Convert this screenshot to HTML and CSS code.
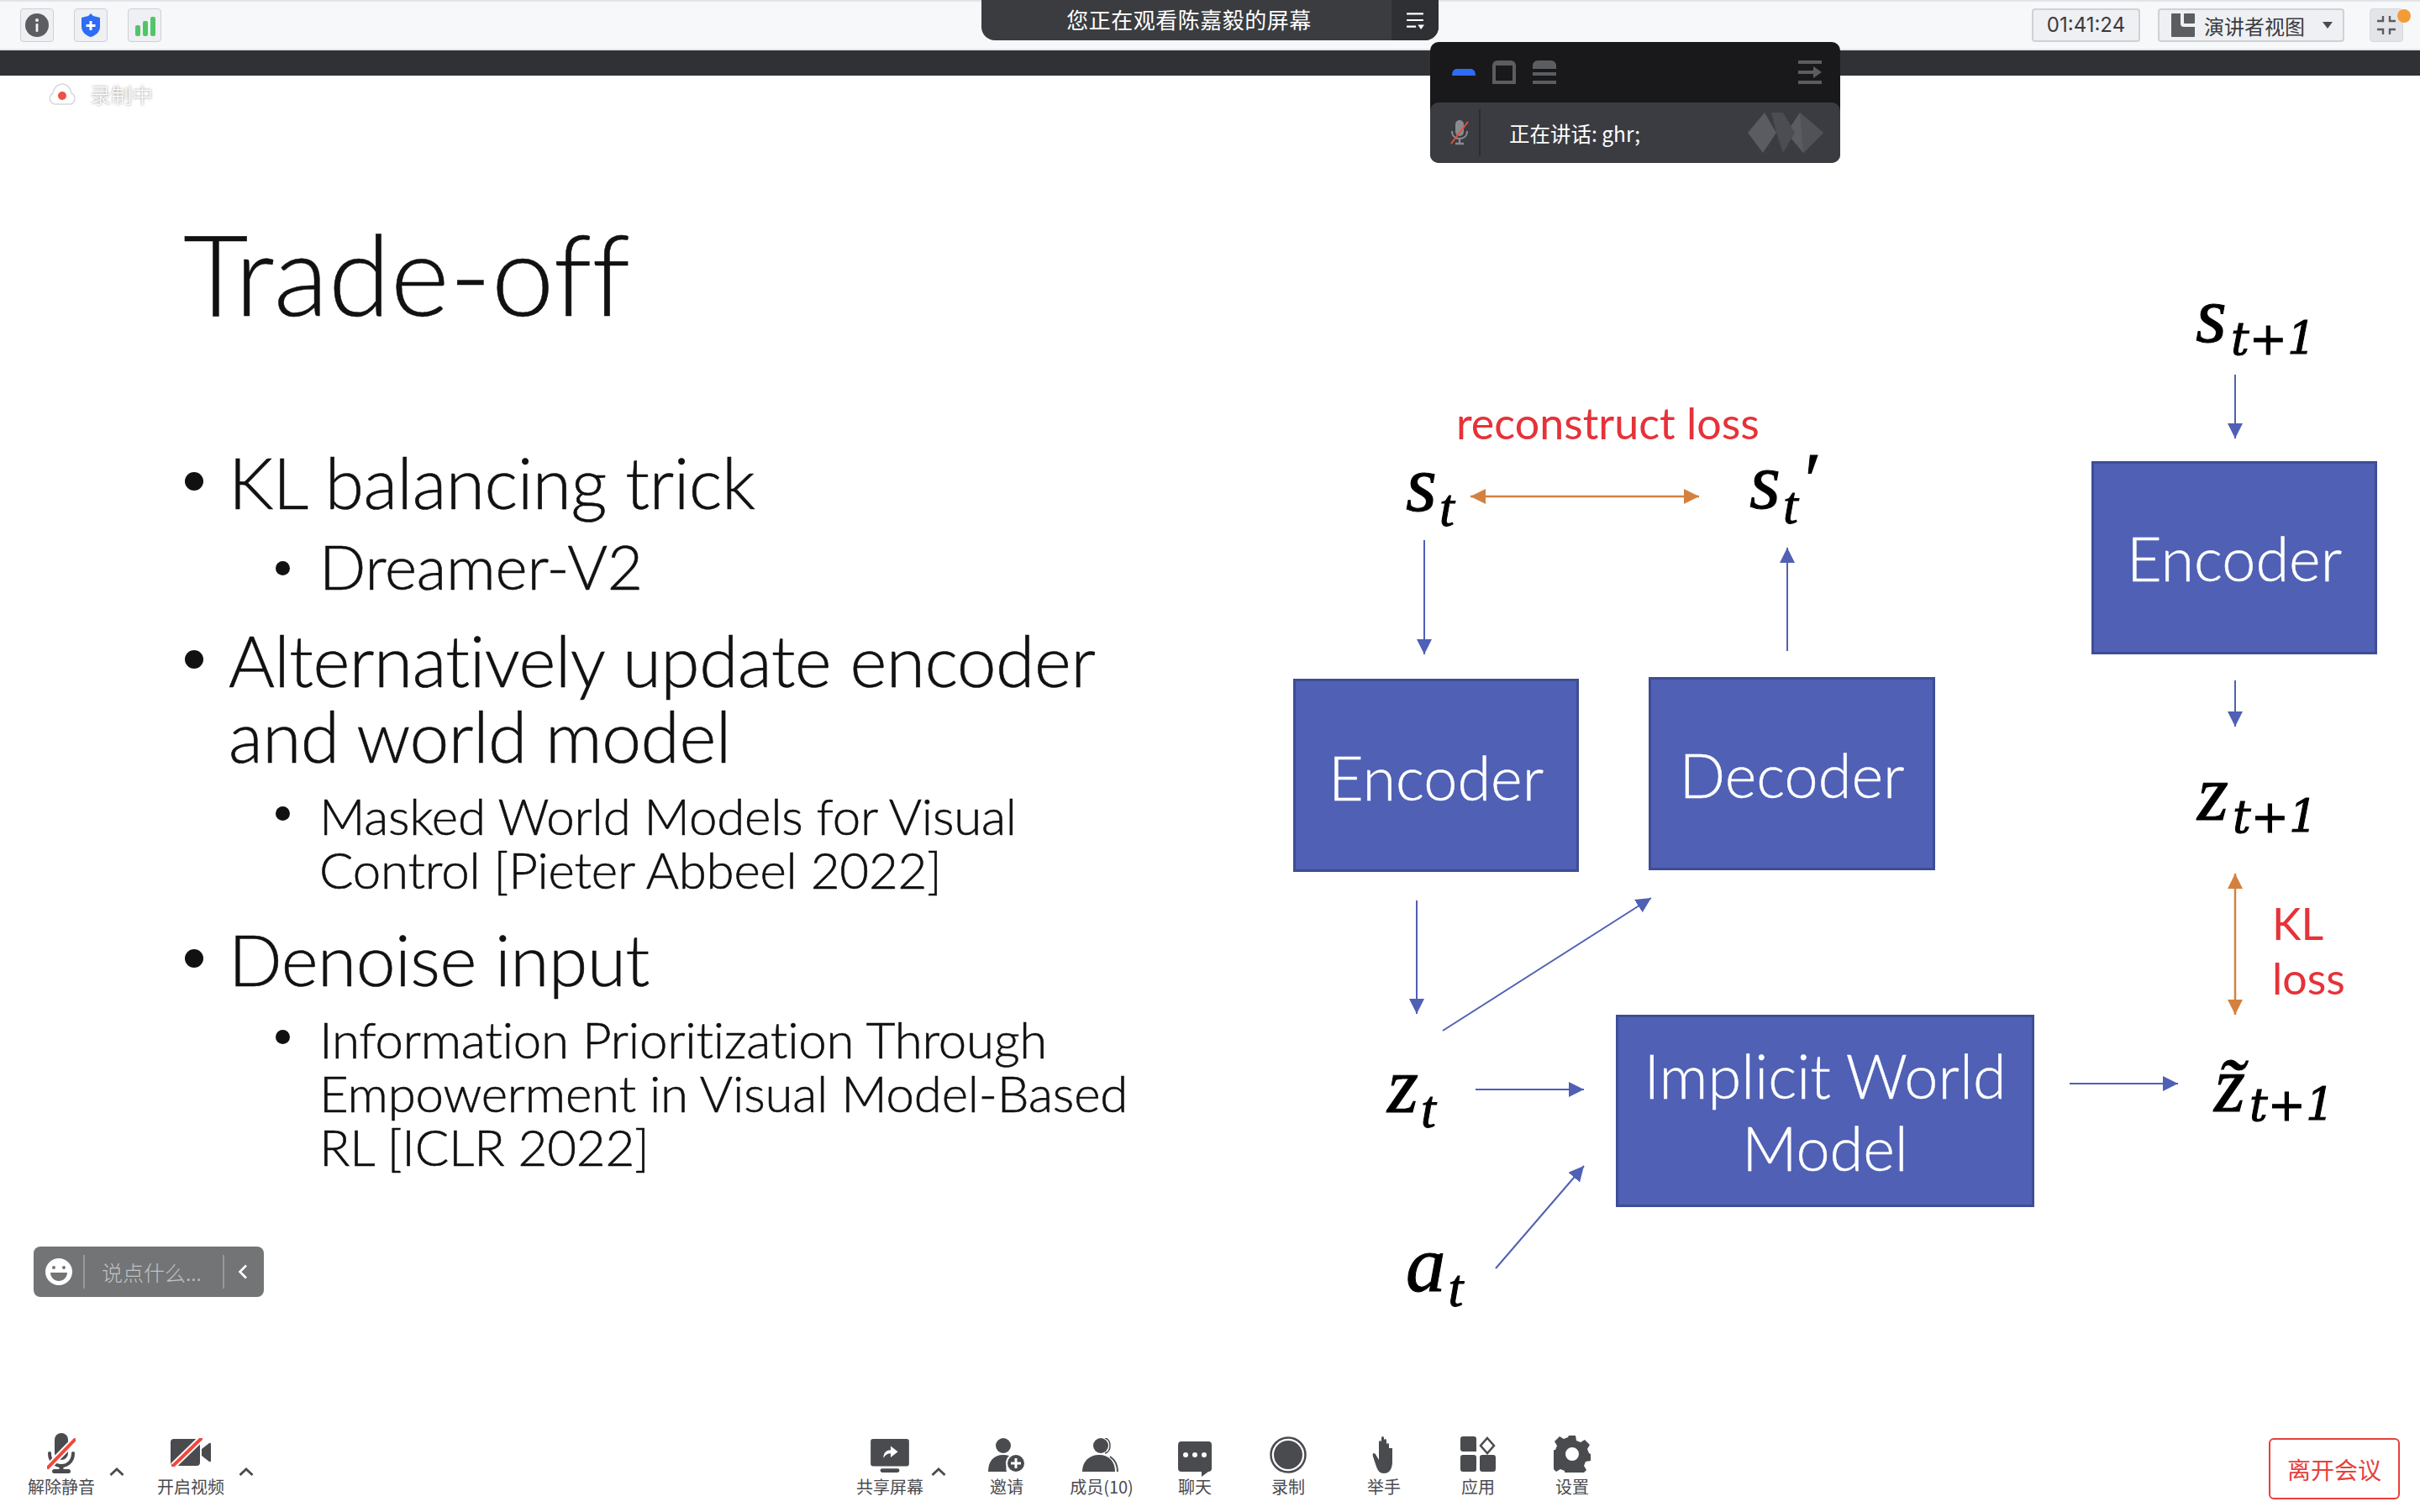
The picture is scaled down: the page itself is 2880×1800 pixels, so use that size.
FILE: index.html
```html
<!DOCTYPE html>
<html lang="zh">
<head>
    <meta charset="UTF-8">
    <title>会议</title>
    <link rel="stylesheet" href="styles.css">
</head>
<body>

<!-- Top status bar -->
<header class="topbar">
    <div class="top-left">
        <div class="top-btn">
            <svg class="top-ico" viewBox="0 0 28 28"><ellipse cx="14" cy="14" rx="14" ry="14" fill="#5c5d61"/><circle cx="14" cy="8" r="2" fill="#f2f3f5"/><rect x="12.6" y="12" width="2.8" height="10" rx="1.2" fill="#f2f3f5"/></svg>
        </div>
        <div class="top-btn">
            <svg class="top-ico" viewBox="0 0 28 28"><path d="M14 0l3 3 8 2v11c0 6-6 11-11 12C9 27 3 22 3 16V5l8-2z" fill="#2e6cf6"/><path d="M12.5 9h3v4h4v3h-4v4h-3v-4h-4v-3h4z" fill="#fff"/></svg>
        </div>
        <div class="top-btn">
            <svg class="top-ico" viewBox="0 0 28 28"><rect x="3" y="14" width="6" height="13" rx="2" fill="#52c569"/><rect x="12" y="9" width="6" height="18" rx="2" fill="#52c569"/><rect x="21" y="4" width="6" height="23" rx="2" fill="#52c569"/></svg>
        </div>
    </div>
    <div class="top-right">
        <div class="timer">01:41:24</div>
        <div class="view-btn">
            <svg class="view-ico" viewBox="0 0 28 28"><path d="M1 0h10v12a4 4 0 0 0 4 4h13v11a1 1 0 0 1-1 1H1a1 1 0 0 1-1-1V1a1 1 0 0 1 1-1z" fill="#5c5d61"/><rect x="15" y="0" width="13" height="12" rx="1" fill="#5c5d61"/></svg>
            <span>演讲者视图</span>
            <i class="caret"></i>
        </div>
        <div class="full-btn">
            <svg class="full-ico" viewBox="0 0 24 24"><path d="M8 1v6H1M16 1v6h7M8 23v-6H1M16 23v-6h7" fill="none" stroke="#5c5d61" stroke-width="2.4"/></svg>
            <span class="full-dot"></span>
        </div>
    </div>
</header>
<div class="darkstrip"></div>

<!-- Banner and speaker panel hang over the bar -->
<div class="banner">
    <div class="banner-text">您正在观看陈嘉毅的屏幕</div>
    <div class="banner-menu">
        <svg class="banner-ico" viewBox="0 0 20 20"><path d="M1 2h18v2H1zM1 9h18v2H1zM1 16h10v2H1z" fill="#fff"/><path d="M13 15h7l-3.5 5z" fill="#fff"/></svg>
    </div>
</div>

<div class="speaker">
    <div class="speaker-top">
        <svg class="sp-ico" viewBox="0 0 28 28"><path d="M0 18c0-6 3-8 6-8h16c3 0 6 2 6 8z" fill="#2e6cf6"/></svg>
        <svg class="sp-ico" viewBox="0 0 28 28"><path d="M0 28V6a6 6 0 0 1 6-6h16a6 6 0 0 1 6 6v22z" fill="#5c5d61"/><rect x="4" y="6" width="20" height="18" fill="#19191b"/></svg>
        <svg class="sp-ico" viewBox="0 0 28 28"><path d="M0 10V6a6 6 0 0 1 6-6h16a6 6 0 0 1 6 6v4z" fill="#5c5d61"/><rect y="14" width="28" height="4" fill="#5c5d61"/><rect y="24" width="28" height="4" fill="#5c5d61"/></svg>
        <svg class="sp-ico sp-last" viewBox="0 0 28 28"><rect width="28" height="4" fill="#5c5d61"/><rect y="24" width="28" height="4" fill="#5c5d61"/><path d="M0 12h18V7l10 7-10 7v-5H0z" fill="#5c5d61"/></svg>
    </div>
    <div class="speaker-row">
        <svg class="sp-mic" viewBox="0 0 24 30"><rect x="7" y="0" width="10" height="19" rx="5" fill="#8a8b8f"/><path d="M3 13c0 6 4 9 9 9s9-3 9-9" fill="none" stroke="#8a8b8f" stroke-width="2"/><path d="M12 22v5M7 28h10" stroke="#8a8b8f" stroke-width="2.4"/><path d="M2 28L22 2" stroke="#e8503f" stroke-width="2"/></svg>
        <span class="sp-divider"></span>
        <span class="sp-text">正在讲话: ghr;</span>
        <svg class="sp-avatar" viewBox="0 0 90 48"><path d="M20 0l14 24-16 24L0 24zM62 0l28 24-24 24-20-24z" fill="#5a5c61"/><path d="M28 0h14l14 24-14 24-8-24z" fill="#4b4d52"/><path d="M62 0l28 24-24 24z" fill="#505257"/></svg>
    </div>
</div>

<main class="slide">
    <div class="rec">
        <svg class="rec-ico" viewBox="0 0 35 26"><path d="M8 25a7 7 0 0 1-2-13C7 5 12 1 17 1s10 4 11 11a7 7 0 0 1-1 13z" fill="#fff" stroke="#d8d8d8" stroke-width="1.5"/><ellipse cx="17" cy="15" rx="5" ry="5" fill="#ee5146"/></svg>
        <span class="rec-text">录制中</span>
    </div>

    <h1 class="slide-title">Trade-off</h1>
    <ul class="points">
        <li class="p-first">KL balancing trick
            <ul class="subpoints"><li class="sub-big">Dreamer-V2</li></ul>
        </li>
        <li class="p-second">Alternatively update encoder and world model
            <ul class="subpoints"><li>Masked World Models for Visual Control [Pieter Abbeel 2022]</li></ul>
        </li>
        <li class="p-third">Denoise input
            <ul class="subpoints"><li>Information Prioritization Through Empowerment in Visual Model-Based RL [ICLR 2022]</li></ul>
        </li>
    </ul>

    <!-- Diagram: coordinates are page coordinates -->
    <svg class="arrows" viewBox="0 90 2880 1600">
        <defs>
            <marker id="blue" markerUnits="userSpaceOnUse" markerWidth="20" markerHeight="18" refX="18" refY="9" orient="auto-start-reverse"><path d="M0 0L18 9L0 18z" fill="#4f60b5"/></marker>
            <marker id="orange" markerUnits="userSpaceOnUse" markerWidth="20" markerHeight="18" refX="18" refY="9" orient="auto-start-reverse"><path d="M0 0L18 9L0 18z" fill="#d3813f"/></marker>
        </defs>
        <g class="line-blue">
            <path d="M1695 643V779" marker-end="url(#blue)"/>
            <path d="M2127 775V652" marker-end="url(#blue)"/>
            <path d="M2660 446V522" marker-end="url(#blue)"/>
            <path d="M2660 810V865" marker-end="url(#blue)"/>
            <path d="M1686 1072V1207" marker-end="url(#blue)"/>
            <path d="M1717 1227L1965 1069" marker-end="url(#blue)"/>
            <path d="M1756 1297H1885" marker-end="url(#blue)"/>
            <path d="M1780 1510L1885 1388" marker-end="url(#blue)"/>
            <path d="M2463 1290H2592" marker-end="url(#blue)"/>
        </g>
        <g class="line-orange">
            <path d="M1750 591H2022" marker-start="url(#orange)" marker-end="url(#orange)"/>
            <path d="M2660 1040V1208" marker-start="url(#orange)" marker-end="url(#orange)"/>
        </g>
    </svg>

    <div class="box box-enc1">Encoder</div>
    <div class="box box-dec">Decoder</div>
    <div class="box box-enc2">Encoder</div>
    <div class="box box-world">Implicit World<br>Model</div>

    <div class="red-label lbl-recon">reconstruct loss</div>
    <div class="red-label lbl-kl">KL<br>loss</div>

    <div class="math m-st">s<sub>t</sub></div>
    <div class="math m-stp">s<sub>t</sub><span class="prime">′</span></div>
    <div class="math m-st1">s<sub class="wide">t+1</sub></div>
    <div class="math m-zt1">z<sub class="wide">t+1</sub></div>
    <div class="math m-zt">z<sub>t</sub></div>
    <div class="math m-at">a<sub>t</sub></div>
    <div class="math m-ztl">z̃<sub class="wide">t+1</sub></div>

    <div class="chatbox">
        <svg class="smile" viewBox="0 0 32 32"><circle cx="16" cy="16" r="16" fill="#fff"/><circle cx="10" cy="11" r="2" fill="#737476"/><circle cx="22" cy="11" r="2" fill="#737476"/><path d="M6 17h20c0 6-5 10-10 10S6 23 6 17z" fill="#737476"/></svg>
        <span class="chat-div"></span>
        <span class="chat-text">说点什么...</span>
        <span class="chat-div"></span>
        <svg class="chat-back" viewBox="0 0 12 18"><path d="M10 1.500L2.500 9l7.500 7.500" fill="none" stroke="#fff" stroke-width="2.600"/></svg>
    </div>
</main>

<!-- Bottom toolbar -->
<footer class="toolbar">
    <div class="tb-left">
        <div class="tool t-mute">
            <svg class="ico ico-mic" viewBox="0 0 34 48"><rect x="9" y="0" width="16" height="32" rx="8" fill="#4a4b4f"/><path d="M3 24c0 9 6 15 14 15s14-6 14-15" fill="none" stroke="#4a4b4f" stroke-width="4" stroke-linecap="round"/><path d="M17 38v6" stroke="#4a4b4f" stroke-width="5"/><rect x="6" y="43" width="22" height="5" rx="2.500" fill="#4a4b4f"/><path d="M1 41L33 8" stroke="#fff" stroke-width="8"/><path d="M1 41L33 8" stroke="#f0483e" stroke-width="4" stroke-linecap="round"/></svg>
            <span>解除静音</span>
        </div>
        <svg class="chev" viewBox="0 0 18 10"><path d="M1.500 9L9 2l7.500 7" fill="none" stroke="#4a4b4f" stroke-width="2.800"/></svg>
        <div class="tool t-video">
            <svg class="ico ico-video" viewBox="0 0 48 34"><rect x="0" y="1" width="35" height="32" rx="4" fill="#4a4b4f"/><path d="M37 13l9-7q2-1 2 1v20q0 2-2 1l-9-7z" fill="#4a4b4f"/><path d="M3 33L36 1" stroke="#fff" stroke-width="8"/><path d="M3 33L36 1" stroke="#f0483e" stroke-width="4" stroke-linecap="round"/></svg>
            <span>开启视频</span>
        </div>
        <svg class="chev" viewBox="0 0 18 10"><path d="M1.500 9L9 2l7.500 7" fill="none" stroke="#4a4b4f" stroke-width="2.800"/></svg>
    </div>

    <div class="tb-center">
        <div class="tool t-share">
            <svg class="ico ico-share" viewBox="0 0 48 42"><rect width="48" height="34" rx="3" fill="#4a4b4f"/><rect x="12" y="37" width="24" height="5" rx="2.500" fill="#4a4b4f"/><path d="M16 24c0-7 4-10 9-10V9l9 7-9 7v-5c-4 0-7 2-9 6z" fill="#fff"/></svg>
            <span>共享屏幕</span>
        </div>
        <svg class="chev chev-share" viewBox="0 0 18 10"><path d="M1.500 9L9 2l7.500 7" fill="none" stroke="#4a4b4f" stroke-width="2.800"/></svg>
        <div class="tool t-invite">
            <svg class="ico ico-invite" viewBox="0 0 52 40"><ellipse cx="22" cy="9" rx="9" ry="9" fill="#4a4b4f"/><path d="M4 40c0-12 6-20 18-20 5 0 9 1 12 4-7 3-10 9-8 16z" fill="#4a4b4f"/><circle cx="37" cy="30" r="11" fill="#4a4b4f" stroke="#fff" stroke-width="2"/><path d="M35.500 24h3v4.500h4.500v3h-4.500V36h-3v-4.500H31v-3h4.500z" fill="#fff"/></svg>
            <span>邀请</span>
        </div>
        <div class="tool t-members">
            <svg class="ico ico-members" viewBox="0 0 46 40"><ellipse cx="22" cy="9" rx="9" ry="9" fill="#4a4b4f"/><path d="M27 0c4 1 6 5 6 9s-2 8-6 9" fill="none" stroke="#4a4b4f" stroke-width="1.500"/><path d="M0 40c0-12 8-20 20-20s19 8 19 20z" fill="#4a4b4f"/><path d="M33 22c6 4 9 10 9 18" fill="none" stroke="#4a4b4f" stroke-width="2"/></svg>
            <span>成员(10)</span>
        </div>
        <div class="tool t-chat">
            <svg class="ico ico-chat" viewBox="0 0 40 42"><path d="M4 0h32a4 4 0 0 1 4 4v29a4 4 0 0 1-4 3l-8 6v-6H4a4 4 0 0 1-4-4V4a4 4 0 0 1 4-4z" fill="#4a4b4f"/><circle cx="9" cy="16" r="3" fill="#fff"/><circle cx="20" cy="16" r="3" fill="#fff"/><circle cx="31" cy="16" r="3" fill="#fff"/></svg>
            <span>聊天</span>
        </div>
        <div class="tool t-record">
            <svg class="ico ico-record" viewBox="0 0 44 44"><circle cx="22" cy="22" r="20.500" fill="none" stroke="#4a4b4f" stroke-width="2.500"/><circle cx="22" cy="22" r="17" fill="#4a4b4f"/></svg>
            <span>录制</span>
        </div>
        <div class="tool t-hand">
            <svg class="ico ico-hand" viewBox="0 0 30 44"><path d="M9 22V7q0-2 1.500-2T12 7V2q0-2 1.500-2T15 2v20V5q0-2 1.500-2T18 5v17-12q0-2 1.500-2T21 10v4h0 4v16c0 8-3 14-10 14-5 0-7-3-9-8L2 24q-1-4 1-4t3 3l3 5z" fill="#4a4b4f"/></svg>
            <span>举手</span>
        </div>
        <div class="tool t-apps">
            <svg class="ico ico-apps" viewBox="0 0 42 42"><path d="M3 0h13a3 3 0 0 1 3 3v15H3a3 3 0 0 1-3-3V3a3 3 0 0 1 3-3z" fill="#4a4b4f"/><path d="M32 2l8 9-8 9-8-9z" fill="none" stroke="#4a4b4f" stroke-width="2.500"/><rect y="22" width="19" height="20" rx="3" fill="#4a4b4f"/><rect x="23" y="22" width="19" height="20" rx="3" fill="#4a4b4f"/></svg>
            <span>应用</span>
        </div>
        <div class="tool t-settings">
            <svg class="ico ico-gear" viewBox="0 0 44 44"><path fill-rule="evenodd" d="M18 0h8l1 6 5 2 5-3 6 6-3 5 2 5 2 1v8l-6 1-2 5 3 5-6 6-5-3-5 2-1 2h-8l-1-6-5-2-5 3-6-6 3-5-2-5-2-1v-8l6-1 2-5-3-5 6-6 5 3 5-2zM22 14a8 8 0 1 0 0 16 8 8 0 0 0 0-16z" fill="#4a4b4f"/></svg>
            <span>设置</span>
        </div>
    </div>

    <button class="leave">离开会议</button>
</footer>

</body>
</html>
```

FILE: styles.css
```css
/* Meeting window, 2880 x 1800 */
body {
    margin: 0;
    width: 2880px;
    height: 1800px;
    display: flex;
    flex-direction: column;
    overflow: hidden;
    position: relative;
    background-color: #fff;
    font-family: "Noto Sans CJK SC", "Noto Sans", sans-serif;
    color: #4a4b4f;
}

/* Top bar */
.topbar {
    height: 60px;
    box-sizing: border-box;
    flex: none;
    border-top: 2px solid #e3e4e8;
    border-bottom: 2px solid #e3e4e8;
    background-color: #f7f8fa;
    display: flex;
    justify-content: space-between;
    padding: 8px 20px 0 24px;
}
.top-left {
    display: flex;
    gap: 24px;
}
.top-btn {
    width: 40px;
    height: 40px;
    box-sizing: border-box;
    border: 1px solid #cfd0d4;
    border-radius: 4px;
    background-color: #eef0f3;
    display: flex;
    align-items: center;
    justify-content: center;
}
.top-ico {
    width: 28px;
    height: 28px;
}
.top-right {
    display: flex;
    gap: 21px;
}
.timer {
    width: 129px;
    height: 40px;
    box-sizing: border-box;
    border: 2px solid #d0d1d5;
    border-radius: 4px;
    background-color: #eef0f3;
    font-family: "Inter", "Liberation Sans", sans-serif;
    font-size: 24px;
    line-height: 36px;
    text-align: center;
    color: #3a3b3f;
}
.view-btn {
    width: 222px;
    height: 40px;
    box-sizing: border-box;
    border: 2px solid #d0d1d5;
    border-radius: 4px;
    background-color: #eef0f3;
    display: flex;
    align-items: center;
    padding-left: 14px;
    font-size: 24px;
    color: #3a3b3f;
}
.view-ico {
    width: 28px;
    height: 28px;
    margin-right: 11px;
}
.caret {
    width: 0;
    height: 0;
    margin-left: 21px;
    border-left: 6px solid transparent;
    border-right: 6px solid transparent;
    border-top: 8px solid #4a4b4f;
}
.full-btn {
    width: 40px;
    height: 40px;
    margin-left: 9px;
    border: 1px solid #d8d9dd;
    box-sizing: border-box;
    border-radius: 4px;
    background-color: #e3e4e8;
    display: flex;
    align-items: center;
    justify-content: center;
    position: relative;
}
.full-ico {
    width: 24px;
    height: 24px;
}
.full-dot {
    position: absolute;
    right: -10px;
    top: 0;
    width: 16px;
    height: 16px;
    border-radius: 50%;
    background-color: #f39c37;
}
.darkstrip {
    height: 30px;
    flex: none;
    background-color: #303135;
}

/* Share banner */
.banner {
    position: absolute;
    left: 1168px;
    top: 0;
    width: 544px;
    height: 48px;
    border-radius: 0 0 16px 16px;
    overflow: hidden;
    display: flex;
    background-color: #3a3c40;
}
.banner-text {
    flex: 1;
    padding-left: 6px;
    text-align: center;
    color: #fff;
    font-size: 26px;
    letter-spacing: 0.5px;
    line-height: 46px;
}
.banner-menu {
    width: 56px;
    background-color: #2f3034;
    display: flex;
    align-items: center;
    justify-content: center;
}
.banner-ico {
    width: 22px;
    height: 22px;
}

/* Speaker panel */
.speaker {
    position: absolute;
    left: 1702px;
    top: 50px;
    width: 488px;
    height: 144px;
    border-radius: 10px;
    overflow: hidden;
    background-color: #19191b;
    display: flex;
    flex-direction: column;
}
.speaker-top {
    height: 72px;
    display: flex;
    align-items: center;
    gap: 20px;
    padding: 0 22px 0 26px;
}
.sp-ico {
    width: 28px;
    height: 28px;
}
.sp-last {
    margin-left: auto;
}
.speaker-row {
    flex: 1;
    background-color: #3a3c41;
    border-radius: 10px;
    display: flex;
    align-items: center;
    padding-left: 23px;
}
.sp-mic {
    width: 24px;
    height: 30px;
}
.sp-divider {
    width: 2px;
    height: 56px;
    margin-left: 11px;
    background-color: #2c2d31;
}
.sp-text {
    margin-left: 34px;
    color: #fff;
    font-size: 24.5px;
}
.sp-avatar {
    width: 90px;
    height: 48px;
    margin-left: auto;
    margin-right: 20px;
}

/* Slide */
.slide {
    flex: 1;
    position: relative;
    padding-left: 218px;
    font-family: "Lato", "Open Sans", sans-serif;
    font-weight: 300;
    color: #111;
}
.rec {
    position: absolute;
    left: 57px;
    top: 4px;
    display: flex;
    align-items: center;
    gap: 15px;
}
.rec-ico {
    width: 35px;
    height: 26px;
}
.rec-text {
    color: #fff;
    font-family: "Noto Sans CJK SC", sans-serif;
    font-size: 25px;
    text-shadow: 0 0 3px #777;
}
.slide-title {
    margin: 155px 0 0;
    font-size: 134px;
    font-weight: 300;
    line-height: 160px;
    letter-spacing: 0.2px;
    -webkit-text-stroke: 0.5px #111;
}
.points {
    margin: 0;
    padding: 0 0 0 54px;
    width: 1142px;
    list-style: none;
    font-size: 84px;
    line-height: 90px;
    letter-spacing: -0.5px;
    -webkit-text-stroke: 0.6px #111;
}
.points > li::before {
    content: "";
    display: inline-block;
    width: 22px;
    height: 22px;
    margin: 0 30px 0 -52px;
    border-radius: 50%;
    background-color: #111;
    vertical-align: 22px;
}
.p-first {
    margin-top: 124px;
}
.p-second {
    margin-top: 35px;
}
.p-third {
    margin-top: 30px;
}
.subpoints {
    margin: 0;
    padding: 0 0 0 108px;
    list-style: none;
    font-size: 60px;
    line-height: 64px;
    letter-spacing: -0.2px;
}
.subpoints li {
    margin-top: 18px;
}
.subpoints li::before {
    content: "";
    display: inline-block;
    width: 17px;
    height: 17px;
    margin: 0 35px 0 -52px;
    border-radius: 50%;
    background-color: #111;
    vertical-align: 17px;
}
.subpoints .sub-big {
    margin-top: 23px;
    font-size: 73px;
}

/* Diagram */
.arrows {
    position: absolute;
    left: 0;
    top: 0;
    width: 2880px;
    height: 1600px;
    pointer-events: none;
}
.line-blue path {
    fill: none;
    stroke: #4f60b5;
    stroke-width: 2;
}
.line-orange path {
    fill: none;
    stroke: #d3813f;
    stroke-width: 2.5;
}
.box {
    position: absolute;
    box-sizing: border-box;
    border: 3px solid #3f4d94;
    background-color: #4f60b5;
    color: #fff;
    font-size: 72px;
    line-height: 86px;
    text-align: center;
    display: flex;
    align-items: center;
    justify-content: center;
    -webkit-text-stroke: 0.5px #fff;
}
.box-enc1 { left: 1539px; top: 718px; width: 340px; height: 230px; padding-top: 4px; }
.box-dec { left: 1962px; top: 716px; width: 341px; height: 230px; padding-top: 2px; }
.box-enc2 { left: 2489px; top: 459px; width: 340px; height: 230px; }
.box-world { left: 1923px; top: 1118px; width: 498px; height: 229px; }

.red-label {
    position: absolute;
    color: #e63239;
    font-weight: 400;
    font-size: 52px;
}
.lbl-recon { left: 1733px; top: 381px; line-height: 64px; }
.lbl-kl { left: 2704px; top: 977px; line-height: 65px; }

.math {
    position: absolute;
    font-family: "Liberation Serif", serif;
    font-style: italic;
    font-weight: 400;
    font-size: 95px;
    line-height: 100px;
    color: #000;
    -webkit-text-stroke: 1px #000;
    white-space: nowrap;
}
.math sub {
    font-size: 64px;
    line-height: 0;
    vertical-align: -18px;
    margin-left: 3px;
}
.math sub.wide {
    font-family: "DejaVu Serif", serif;
    font-size: 54px;
    margin-left: 5px;
    vertical-align: -15px;
}
.m-ztl sub.wide {
    vertical-align: -11px;
}
.prime {
    font-style: normal;
    vertical-align: 3px;
    line-height: 0;
    font-size: 90px;
    margin-left: 8px;
}
.m-st { left: 1673px; top: 436px; }
.m-stp { left: 2082px; top: 433px; }
.m-st1 { left: 2613px; top: 235px; }
.m-zt1 { left: 2615px; top: 804px; }
.m-zt { left: 1651px; top: 1152px; }
.m-at { left: 1673px; top: 1365px; }
.m-ztl { left: 2635px; top: 1151px; }

/* Chat input */
.chatbox {
    position: absolute;
    left: 40px;
    top: 1394px;
    width: 274px;
    height: 60px;
    box-sizing: border-box;
    border-radius: 8px;
    background-color: #737476;
    display: flex;
    align-items: center;
    padding-left: 14px;
    font-family: "Noto Sans CJK SC", sans-serif;
}
.smile {
    width: 32px;
    height: 32px;
}
.chat-div {
    width: 2px;
    height: 40px;
    margin-left: 13px;
    background-color: #98999b;
}
.chat-text {
    width: 151px;
    padding-left: 20px;
    box-sizing: border-box;
    font-size: 25px;
    color: #c2c2c2;
    white-space: nowrap;
}
.chat-back {
    width: 12px;
    height: 18px;
    margin-left: 16px;
}

/* Bottom toolbar */
.toolbar {
    height: 110px;
    flex: none;
    position: relative;
    display: flex;
    align-items: flex-end;
    color: #4a4b4f;
}
.tool {
    display: flex;
    flex-direction: column;
    align-items: center;
    font-size: 20px;
    line-height: 28px;
    padding-bottom: 16px;
    white-space: nowrap;
}
.ico {
    display: block;
}
.tb-left {
    width: 1019px;
    flex: none;
    display: flex;
    align-items: flex-end;
    padding-left: 33px;
    box-sizing: border-box;
}
.t-mute { width: 80px; }
.t-video { width: 80px; margin-left: 39px; }
.chev {
    width: 18px;
    height: 10px;
    margin: 0 0 43px 17px;
}
.ico-mic { width: 34px; height: 48px; margin-bottom: 2px; }
.ico-video { width: 48px; height: 34px; margin-bottom: 10px; }
.tb-center {
    display: flex;
    align-items: flex-end;
}
.t-share { width: 80px; }
.ico-share { width: 48px; height: 40px; margin-bottom: 3px; }
.chev-share { margin-left: 9px; }
.t-invite { width: 52px; margin-left: 46px; }
.ico-invite { width: 52px; height: 40px; margin-bottom: 4px; }
.t-members { width: 60px; margin-left: 57px; }
.ico-members { width: 46px; height: 40px; margin-bottom: 4px; }
.t-chat { width: 40px; margin-left: 61px; }
.ico-chat { width: 40px; height: 42px; margin-bottom: -2px; }
.t-record { width: 44px; margin-left: 69px; }
.ico-record { width: 44px; height: 44px; margin-bottom: 2px; }
.t-hand { width: 40px; margin-left: 72px; }
.ico-hand { width: 30px; height: 44px; margin-bottom: 2px; }
.t-apps { width: 42px; margin-left: 71px; }
.ico-apps { width: 42px; height: 42px; margin-bottom: 4px; }
.t-settings { width: 44px; margin-left: 69px; }
.ico-gear { width: 44px; height: 44px; margin-bottom: 3px; }
.leave {
    position: absolute;
    right: 24px;
    bottom: 15px;
    width: 156px;
    height: 73px;
    box-sizing: border-box;
    border: 2px solid #e5413c;
    border-radius: 6px;
    background-color: #fff;
    color: #e5413c;
    font-family: "Noto Sans CJK SC", sans-serif;
    font-size: 28px;
}
```
